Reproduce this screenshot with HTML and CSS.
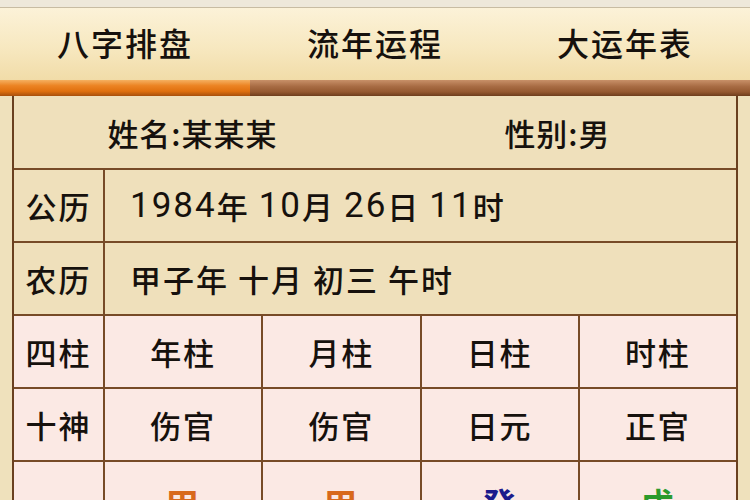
FILE: index.html
```html
<!DOCTYPE html>
<html lang="zh-CN">
<head>
<meta charset="utf-8">
<link rel="stylesheet" href="styles.css">
</head>
<body>
<div class="app">
  <div class="topstrip"></div>
  <nav class="tabs">
    <div class="tab">八字排盘</div>
    <div class="tab">流年运程</div>
    <div class="tab">大运年表</div>
  </nav>
  <div class="indicator"><div class="ind-active"></div><div class="ind-rest"></div></div>
  <div class="sheet">
    <div class="row row-name">
      <div class="half">姓名:某某某</div>
      <div class="half">性别:男</div>
    </div>
    <div class="row row-info">
      <div class="label">公历</div>
      <div class="value"><span class="num">1984</span>年 <span class="num">10</span>月 <span class="num">26</span>日 <span class="num">11</span>时</div>
    </div>
    <div class="row row-info">
      <div class="label">农历</div>
      <div class="value">甲子年 十月 初三 午时</div>
    </div>
    <div class="row row-grid pink">
      <div class="label">四柱</div>
      <div class="cell">年柱</div>
      <div class="cell">月柱</div>
      <div class="cell">日柱</div>
      <div class="cell">时柱</div>
    </div>
    <div class="row row-grid pink">
      <div class="label">十神</div>
      <div class="cell">伤官</div>
      <div class="cell">伤官</div>
      <div class="cell">日元</div>
      <div class="cell">正官</div>
    </div>
    <div class="row row-grid pink">
      <div class="label"></div>
      <div class="cell gan fire">甲</div>
      <div class="cell gan fire">甲</div>
      <div class="cell gan water">癸</div>
      <div class="cell gan earth">戊</div>
    </div>
  </div>
</div>
</body>
</html>
```
FILE: styles.css
```css
html, body {
  margin: 0;
  padding: 0;
}
body {
  width: 750px;
  height: 500px;
  overflow: hidden;
  background: #efe1bc;
  font-family: "Noto Sans CJK SC", "Noto Sans", sans-serif;
  font-weight: 500;
  color: #16110d;
}
.app {
  display: flex;
  flex-direction: column;
}
.topstrip {
  height: 7px;
  background: #eee8da;
  border-bottom: 1px solid #c8bca2;
}
.tabs {
  height: 72px;
  display: flex;
  background: linear-gradient(#fcf2d8, #f7e8c0 55%, #f1dca8);
}
.tab {
  flex: 1;
  display: flex;
  align-items: center;
  justify-content: center;
  font-size: 32px;
  letter-spacing: 2px;
  padding-bottom: 4px;
}
.indicator {
  height: 16px;
  display: flex;
}
.ind-active {
  width: 250px;
  background: linear-gradient(#f5b060, #ec8424 35%, #e0700e 70%, #a8500c);
}
.ind-rest {
  flex: 1;
  background: linear-gradient(#c89068, #a86c44 40%, #94582f 75%, #6e3e1c);
}
.sheet {
  margin: 0 12px;
  border-left: 2px solid #6a401f;
  border-right: 2px solid #6a401f;
  background: #efe0bb;
}
.row {
  display: flex;
  border-bottom: 2px solid #774b27;
  height: 71px;
}
.row-name {
  height: 72px;
}
.half {
  flex: 1;
  display: flex;
  align-items: center;
  justify-content: center;
  font-size: 31px;
  letter-spacing: 1px;
}
.half:first-child {
  padding-right: 8px;
}
.label {
  width: 89px;
  border-right: 2px solid #774b27;
  display: flex;
  align-items: center;
  justify-content: center;
  font-size: 31px;
  letter-spacing: 2px;
}
.value {
  flex: 1;
  display: flex;
  align-items: center;
  padding-left: 25px;
  font-size: 31px;
  letter-spacing: 2px;
  white-space: pre;
}
.num {
  font-family: Roboto, "Noto Sans", sans-serif;
  font-weight: 400;
  font-size: 35px;
  letter-spacing: 2px;
}
.pink {
  background: #fbe9e4;
}
.cell {
  flex: 1;
  display: flex;
  align-items: center;
  justify-content: center;
  border-right: 2px solid #774b27;
  font-size: 31px;
  letter-spacing: 2px;
}
.cell:last-child {
  border-right: none;
}
.gan {
  font-size: 34px;
  font-weight: bold;
  padding-top: 12px;
}
.fire {
  color: #d8691c;
}
.water {
  color: #1c1c8c;
}
.earth {
  color: #2c9a2c;
}
```
